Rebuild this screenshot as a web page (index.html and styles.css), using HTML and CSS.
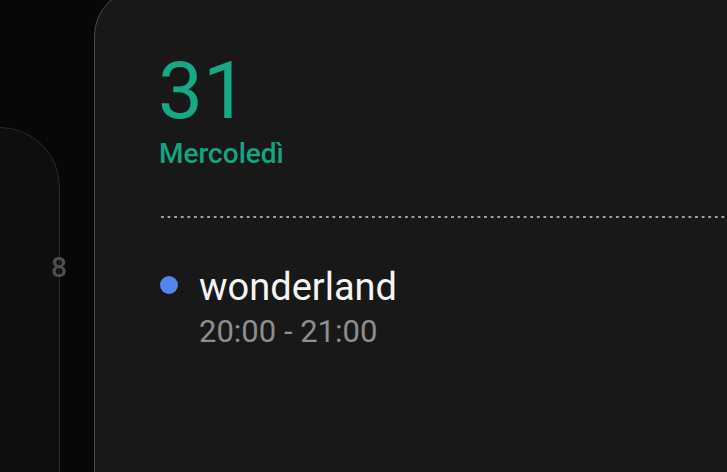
FILE: index.html
```html
<!DOCTYPE html>
<html lang="it">
<head>
  <meta charset="UTF-8">
  <meta name="viewport" content="width=device-width, initial-scale=1.0">
  <title>Calendario - 31</title>
  <link rel="stylesheet" href="styles.css">
</head>
<body>
  <div class="stage">
    <div class="back-card">
      <div class="day-num">8</div>
    </div>
    <div class="day-card">
      <div class="day-date">31</div>
      <div class="day-name">Mercoledì</div>
      <div class="dotted"></div>
      <div class="event">
        <span class="event-dot"></span>
        <div class="event-info">
          <div class="event-title">wonderland</div>
          <div class="event-time">20:00 - 21:00</div>
        </div>
      </div>
    </div>
  </div>
</body>
</html>
```

FILE: styles.css
```css
body {
  font-family: Roboto, "Noto Sans", sans-serif;
  background-color: #070707;
  margin: 0;
  padding: 0;
  height: 100vh;
  overflow: hidden;
}
.stage {
  display: flex;
  align-items: flex-start;
}
.back-card {
  flex: 0 0 auto;
  width: 118px;
  height: 420px;
  margin-left: -58px;
  margin-top: 127px;
  background: #0e0e0e;
  border: 1px solid #2a2a2a;
  border-radius: 0 60px 0 0;
  padding-top: 126px;
  box-sizing: border-box;
}
.day-num {
  text-align: right;
  margin-right: -8px;
  font-size: 28px;
  line-height: 1;
  font-weight: 500;
  color: #4f4f4f;
}
.day-card {
  flex: 0 0 auto;
  width: 700px;
  height: 520px;
  margin-left: 34px;
  margin-top: -12px;
  background: #181818;
  border: 1px solid #4a4a4a;
  border-radius: 48px 0 0 0;
  padding: 62px 0 0 64px;
  box-sizing: border-box;
}
.day-date {
  font-size: 80px;
  line-height: 1;
  color: #17a886;
  margin-left: -1px;
}
.day-name {
  margin-top: 9px;
  font-size: 28px;
  line-height: 1;
  font-weight: 500;
  color: #15a381;
}
.dotted {
  margin-top: 48px;
  height: 2px;
  margin-left: 2px;
  background-image: linear-gradient(to right, #a0a0a0 0, #a0a0a0 2.4px, transparent 2.4px);
  background-size: 6.6px 2px;
}
.event {
  display: flex;
  align-items: flex-start;
  margin-top: 50px;
}
.event-dot {
  width: 18px;
  height: 18px;
  border-radius: 50%;
  background: #5286ed;
  margin: 8px 0 0 1px;
  flex: 0 0 auto;
}
.event-info {
  margin-left: 21px;
}
.event-title {
  font-size: 38px;
  line-height: 1;
  color: #f5f5f5;
}
.event-time {
  margin-top: 10px;
  font-size: 31px;
  line-height: 1;
  color: #8e8e8e;
}
```
